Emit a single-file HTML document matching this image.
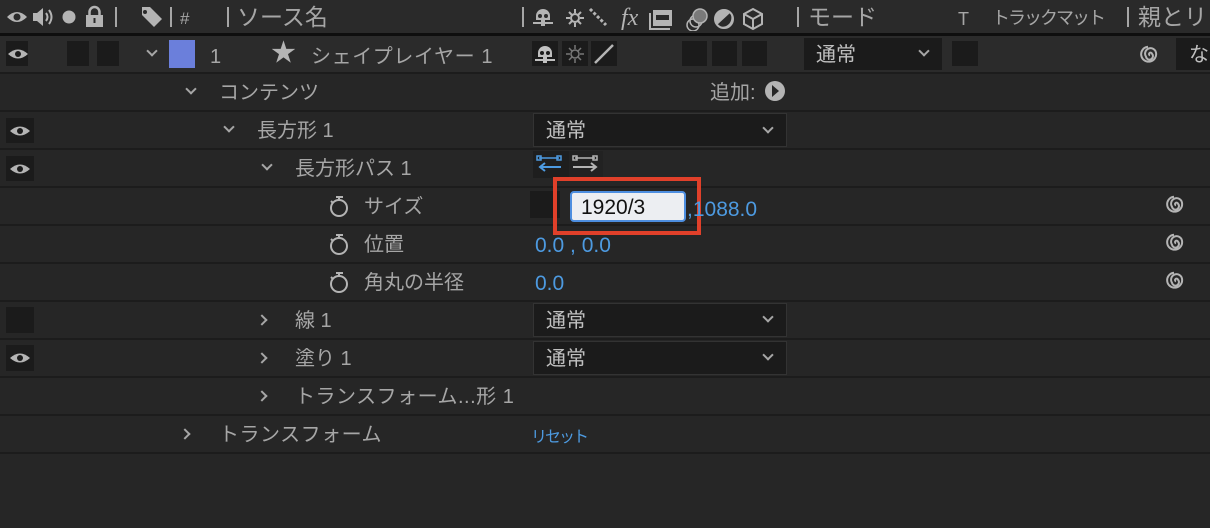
<!DOCTYPE html>
<html><head><meta charset="utf-8"><style>
*{margin:0;padding:0;box-sizing:border-box}
body{width:1210px;height:528px;background:#262626;overflow:hidden;position:relative;font-family:"Liberation Sans","Noto Sans CJK JP",sans-serif;color:#a6a6a6;font-size:20px}
.a{position:absolute}
.t{position:absolute;white-space:nowrap;line-height:24px}
.sep{position:absolute;left:0;width:1210px;height:2px;background:#1c1c1c}
.box{position:absolute;background:#1b1b1b}
.blue{color:#4d9ae0}
.dd{position:absolute;background:#1b1b1b;border:1px solid #333}
.chev{position:absolute;width:8px;height:8px;border-right:2px solid #a6a6a6;border-bottom:2px solid #a6a6a6}
.down{transform:rotate(45deg)}
.right{transform:rotate(-45deg)}
.vb{position:absolute;width:2px;height:20px;background:#a6a6a6;top:7px}
</style></head><body>
<!-- header -->
<div class="a" style="left:0;top:0;width:1210px;height:33px;background:#2a2a2a"></div>
<div class="a" style="left:0;top:33px;width:1210px;height:3px;background:#0e0e0e"></div>
<svg class="a" style="left:6px;top:5px" width="120" height="24" viewBox="0 0 120 24">
<path d="M1 12 Q11 2 21 12 Q11 22 1 12Z" fill="#b4b4b4"/><circle cx="11" cy="12" r="3.5" fill="#2a2a2a"/>
<path d="M27 8h4l6-5v18l-6-5h-4z" fill="#b4b4b4"/><path d="M40 8q3 4 0 8M43 5q5 7 0 14" stroke="#b4b4b4" stroke-width="2" fill="none"/>
<circle cx="63" cy="12" r="6.5" fill="#b4b4b4"/>
<rect x="80" y="10" width="17" height="12" fill="#b4b4b4"/><path d="M83.5 10V7a5 5 0 0 1 10 0v3" stroke="#b4b4b4" stroke-width="2.5" fill="none"/><rect x="87.5" y="13" width="2" height="5" fill="#2a2a2a"/>
</svg>
<div class="vb" style="left:115px"></div>
<svg class="a" style="left:138px;top:4px" width="26" height="24"><path d="M2 3h10l12 12-8 8L4 11V3z" fill="#b4b4b4"/><circle cx="7" cy="8" r="2" fill="#2a2a2a"/></svg>
<div class="vb" style="left:170px"></div>
<div class="t" style="left:180px;top:7px;font-size:17px">#</div>
<div class="vb" style="left:227px"></div>
<div class="t" style="left:237px;top:5px;font-size:23px">ソース名</div>
<div class="vb" style="left:522px"></div>
<svg class="a" style="left:532px;top:5px" width="260" height="26" viewBox="0 0 260 26">
<path d="M4 11a7 7 0 0 1 14 0v4H4z" fill="#b4b4b4"/><circle cx="8" cy="11" r="2" fill="#2a2a2a"/><circle cx="14" cy="11" r="2" fill="#2a2a2a"/><rect x="1" y="17" width="20" height="2" fill="#b4b4b4"/><rect x="9" y="15" width="4" height="6" fill="#b4b4b4"/>
<circle cx="43" cy="13" r="4" fill="none" stroke="#b4b4b4" stroke-width="2"/><path d="M43 4v4M43 18v4M34 13h4M48 13h4M37 7l3 3M46 16l3 3M37 19l3-3M46 10l3-3" stroke="#b4b4b4" stroke-width="2"/>
<path d="M58 4l4 4 4 4 4 4 4 4" stroke="#b4b4b4" stroke-width="3" stroke-dasharray="3 2"/>
<text x="89" y="20" font-family="Liberation Serif" font-style="italic" font-size="24" fill="#b4b4b4">fx</text>
<rect x="121" y="5" width="19" height="16" fill="#b4b4b4"/><rect x="124" y="10" width="13" height="5" fill="#2a2a2a"/><path d="M118 8v16h20" stroke="#b4b4b4" stroke-width="2" fill="none"/>
<circle cx="161" cy="20" r="6" fill="none" stroke="#b4b4b4" stroke-width="1.5"/><circle cx="164" cy="16" r="6" fill="none" stroke="#b4b4b4" stroke-width="1.5"/><circle cx="168" cy="11" r="7" fill="#7a7a7a" stroke="#b4b4b4" stroke-width="1.5"/>
<circle cx="192" cy="14" r="9" fill="#b4b4b4"/><path d="M198 8a9 9 0 0 1-13 12z" fill="#2a2a2a"/><circle cx="192" cy="14" r="9" fill="none" stroke="#b4b4b4" stroke-width="2"/>
<path d="M221 4l9 5v10l-9 5-9-5V9zM212 9l9 5 9-5M221 14v10" stroke="#b4b4b4" stroke-width="2" fill="none"/>
</svg>
<div class="vb" style="left:797px"></div>
<div class="t" style="left:808px;top:5px;font-size:23px">モード</div>
<div class="t" style="left:958px;top:7px;font-size:18px">T</div>
<div class="t" style="left:992px;top:6px;font-size:18px;letter-spacing:-2px">トラックマット</div>
<div class="vb" style="left:1127px"></div>
<div class="t" style="left:1138px;top:5px;font-size:23px">親とリ</div>

<!-- row 1 -->
<div class="a" style="left:0;top:36px;width:1210px;height:36px;background:#2b2b2b"></div>
<div class="box" style="left:6px;top:41px;width:22px;height:25px"></div>
<svg class="a" style="left:7px;top:46px" width="22" height="16"><path d="M1 8 Q11 -1 21 8 Q11 17 1 8Z" fill="#b4b4b4"/><circle cx="11" cy="8" r="3" fill="#1b1b1b"/></svg>
<div class="box" style="left:67px;top:41px;width:22px;height:25px"></div>
<div class="box" style="left:97px;top:41px;width:22px;height:25px"></div>
<div class="chev down" style="left:148px;top:47px"></div>
<div class="a" style="left:145px;top:40px;width:0;height:0"></div>
<div class="a" style="left:145px;top:40px"></div>
<div class="a" style="left:145px;top:40px"></div>
<div class="a" style="left:169px;top:40px;width:26px;height:28px;background:#6b7fdb"></div>
<div class="t" style="left:210px;top:45px">1</div>
<div class="t" style="left:271px;top:41px;font-size:25px;color:#b4b4b4">★</div>
<div class="t" style="left:311px;top:45px;letter-spacing:0.6px">シェイプレイヤー 1</div>
<div class="box" style="left:532px;top:41px;width:26px;height:25px"></div>
<div class="box" style="left:562px;top:41px;width:26px;height:25px"></div>
<div class="box" style="left:591px;top:41px;width:26px;height:25px"></div>
<svg class="a" style="left:532px;top:41px" width="90" height="26">
<path d="M6 12a7 7 0 0 1 14 0v4H6z" fill="#c0c0c0"/><circle cx="10" cy="12" r="2" fill="#1b1b1b"/><circle cx="16" cy="12" r="2" fill="#1b1b1b"/><rect x="3" y="18" width="20" height="2" fill="#c0c0c0"/><rect x="11" y="16" width="4" height="6" fill="#c0c0c0"/>
<circle cx="43" cy="13" r="4" fill="none" stroke="#777" stroke-width="1.5"/><path d="M43 4v4M43 18v4M34 13h4M48 13h4M37 7l3 3M46 16l3 3M37 19l3-3M46 10l3-3" stroke="#777" stroke-width="1.5"/>
<path d="M63 22L81 4" stroke="#b4b4b4" stroke-width="2.5"/></svg>
<div class="box" style="left:682px;top:41px;width:25px;height:25px"></div>
<div class="box" style="left:712px;top:41px;width:25px;height:25px"></div>
<div class="box" style="left:742px;top:41px;width:25px;height:25px"></div>
<div class="box" style="left:804px;top:38px;width:138px;height:32px"></div>
<div class="t" style="left:816px;top:43px;color:#c0c0c0">通常</div>
<div class="chev down" style="left:920px;top:47px"></div>
<div class="box" style="left:952px;top:41px;width:26px;height:25px"></div>
<svg class="a" style="left:1138px;top:43px" width="24" height="24"><path d="M12 12.5a1.5 1.5 0 1 1 2 -1.8a3.5 3.5 0 1 1 -6 3a5.5 5.5 0 1 1 10 -4a7.5 7.5 0 1 1 -8 -6" fill="none" stroke="#b4b4b4" stroke-width="2"/></svg>
<div class="box" style="left:1176px;top:38px;width:40px;height:32px"></div>
<div class="t" style="left:1189px;top:43px;color:#c0c0c0">な</div>

<div class="sep" style="top:72px"></div>
<div class="sep" style="top:110px"></div>
<div class="sep" style="top:148px"></div>
<div class="sep" style="top:186px"></div>
<div class="sep" style="top:224px"></div>
<div class="sep" style="top:262px"></div>
<div class="sep" style="top:300px"></div>
<div class="sep" style="top:338px"></div>
<div class="sep" style="top:376px"></div>
<div class="sep" style="top:414px"></div>
<div class="sep" style="top:452px"></div>

<!-- contents -->
<div class="chev down" style="left:187px;top:85px"></div>
<div class="t" style="left:219px;top:81px">コンテンツ</div>
<div class="t" style="left:710px;top:81px">追加:</div>
<svg class="a" style="left:764px;top:80px" width="22" height="22"><circle cx="11" cy="11" r="10" fill="#b4b4b4"/><path d="M8 5l7 6-7 6z" fill="#262626"/></svg>

<!-- eyes -->
<div class="box" style="left:6px;top:118px;width:28px;height:25px"></div>
<svg class="a" style="left:9px;top:123px" width="22" height="16"><path d="M1 8 Q11 -1 21 8 Q11 17 1 8Z" fill="#b4b4b4"/><circle cx="11" cy="8" r="3" fill="#1b1b1b"/></svg>
<div class="box" style="left:6px;top:156px;width:28px;height:25px"></div>
<svg class="a" style="left:9px;top:161px" width="22" height="16"><path d="M1 8 Q11 -1 21 8 Q11 17 1 8Z" fill="#b4b4b4"/><circle cx="11" cy="8" r="3" fill="#1b1b1b"/></svg>
<div class="box" style="left:6px;top:307px;width:28px;height:26px"></div>
<div class="box" style="left:6px;top:345px;width:28px;height:26px"></div>
<svg class="a" style="left:9px;top:350px" width="22" height="16"><path d="M1 8 Q11 -1 21 8 Q11 17 1 8Z" fill="#b4b4b4"/><circle cx="11" cy="8" r="3" fill="#1b1b1b"/></svg>

<!-- rect -->
<div class="chev down" style="left:225px;top:123px"></div>
<div class="t" style="left:257px;top:119px">長方形 1</div>
<div class="dd" style="left:533px;top:113px;width:254px;height:34px"></div>
<div class="t" style="left:546px;top:119px;color:#c0c0c0">通常</div>
<div class="chev down" style="left:764px;top:124px"></div>

<div class="chev down" style="left:263px;top:161px"></div>
<div class="t" style="left:295px;top:157px">長方形パス 1</div>
<div class="box" style="left:533px;top:151px;width:36px;height:27px;background:#1e1e1e"></div>
<div class="box" style="left:569px;top:151px;width:34px;height:27px;background:#222"></div>
<svg class="a" style="left:533px;top:151px" width="72" height="27">
<path d="M6 7h20" stroke="#4d9ae0" stroke-width="1.5"/><rect x="4" y="5" width="4" height="4" fill="none" stroke="#4d9ae0" stroke-width="1.5"/><rect x="24" y="5" width="4" height="4" fill="none" stroke="#4d9ae0" stroke-width="1.5"/><path d="M28 16H8M12 12l-5 4 5 4" stroke="#4d9ae0" stroke-width="2" fill="none"/>
<path d="M42 7h20" stroke="#b4b4b4" stroke-width="1.5"/><rect x="40" y="5" width="4" height="4" fill="none" stroke="#b4b4b4" stroke-width="1.5"/><rect x="60" y="5" width="4" height="4" fill="none" stroke="#b4b4b4" stroke-width="1.5"/><path d="M40 16h22M58 12l5 4-5 4" stroke="#b4b4b4" stroke-width="2" fill="none"/>
</svg>

<!-- properties -->
<svg class="a" style="left:328px;top:194px" width="24" height="100">
<g fill="none" stroke="#b4b4b4" stroke-width="2"><circle cx="11" cy="14" r="8"/><path d="M8 3h7M11 3v3M3 7l2 2"/>
<circle cx="11" cy="52" r="8"/><path d="M8 41h7M11 41v3M3 45l2 2"/>
<circle cx="11" cy="90" r="8"/><path d="M8 79h7M11 79v3M3 83l2 2"/></g></svg>
<div class="t" style="left:364px;top:195px">サイズ</div>
<div class="t" style="left:364px;top:233px">位置</div>
<div class="t" style="left:364px;top:271px">角丸の半径</div>
<div class="box" style="left:530px;top:191px;width:30px;height:27px"></div>
<div class="a" style="left:553px;top:177px;width:148px;height:58px;border:4px solid #e0402a"></div>
<div class="a" style="left:570px;top:191px;width:116px;height:31px;background:#eceef2;border:2px solid #4d8ee0;border-radius:4px"></div>
<div class="t" style="left:581px;top:196px;color:#111;font-size:21px">1920/3</div>
<div class="t blue" style="left:687px;top:198px;font-size:21px">,1088.0</div>
<div class="t blue" style="left:535px;top:234px;font-size:21px">0.0 , 0.0</div>
<div class="t blue" style="left:535px;top:272px;font-size:21px">0.0</div>
<svg class="a" style="left:1164px;top:193px" width="24" height="24"><path d="M12 12.5a1.5 1.5 0 1 1 2 -1.8a3.5 3.5 0 1 1 -6 3a5.5 5.5 0 1 1 10 -4a7.5 7.5 0 1 1 -8 -6" fill="none" stroke="#b4b4b4" stroke-width="2"/></svg>
<svg class="a" style="left:1164px;top:231px" width="24" height="24"><path d="M12 12.5a1.5 1.5 0 1 1 2 -1.8a3.5 3.5 0 1 1 -6 3a5.5 5.5 0 1 1 10 -4a7.5 7.5 0 1 1 -8 -6" fill="none" stroke="#b4b4b4" stroke-width="2"/></svg>
<svg class="a" style="left:1164px;top:269px" width="24" height="24"><path d="M12 12.5a1.5 1.5 0 1 1 2 -1.8a3.5 3.5 0 1 1 -6 3a5.5 5.5 0 1 1 10 -4a7.5 7.5 0 1 1 -8 -6" fill="none" stroke="#b4b4b4" stroke-width="2"/></svg>

<!-- stroke/fill -->
<div class="chev right" style="left:258px;top:316px"></div>
<div class="t" style="left:295px;top:309px">線 1</div>
<div class="dd" style="left:533px;top:303px;width:254px;height:34px"></div>
<div class="t" style="left:546px;top:309px;color:#c0c0c0">通常</div>
<div class="chev down" style="left:764px;top:313px"></div>

<div class="chev right" style="left:258px;top:354px"></div>
<div class="t" style="left:295px;top:347px">塗り 1</div>
<div class="dd" style="left:533px;top:341px;width:254px;height:34px"></div>
<div class="t" style="left:546px;top:347px;color:#c0c0c0">通常</div>
<div class="chev down" style="left:764px;top:351px"></div>

<div class="chev right" style="left:258px;top:392px"></div>
<div class="t" style="left:295px;top:385px;letter-spacing:0.5px">トランスフォーム...形 1</div>

<div class="chev right" style="left:181px;top:430px"></div>
<div class="t" style="left:219px;top:423px;letter-spacing:0.5px">トランスフォーム</div>
<div class="t blue" style="left:531px;top:426px;font-size:16px;letter-spacing:-2px">リセット</div>
</body></html>
